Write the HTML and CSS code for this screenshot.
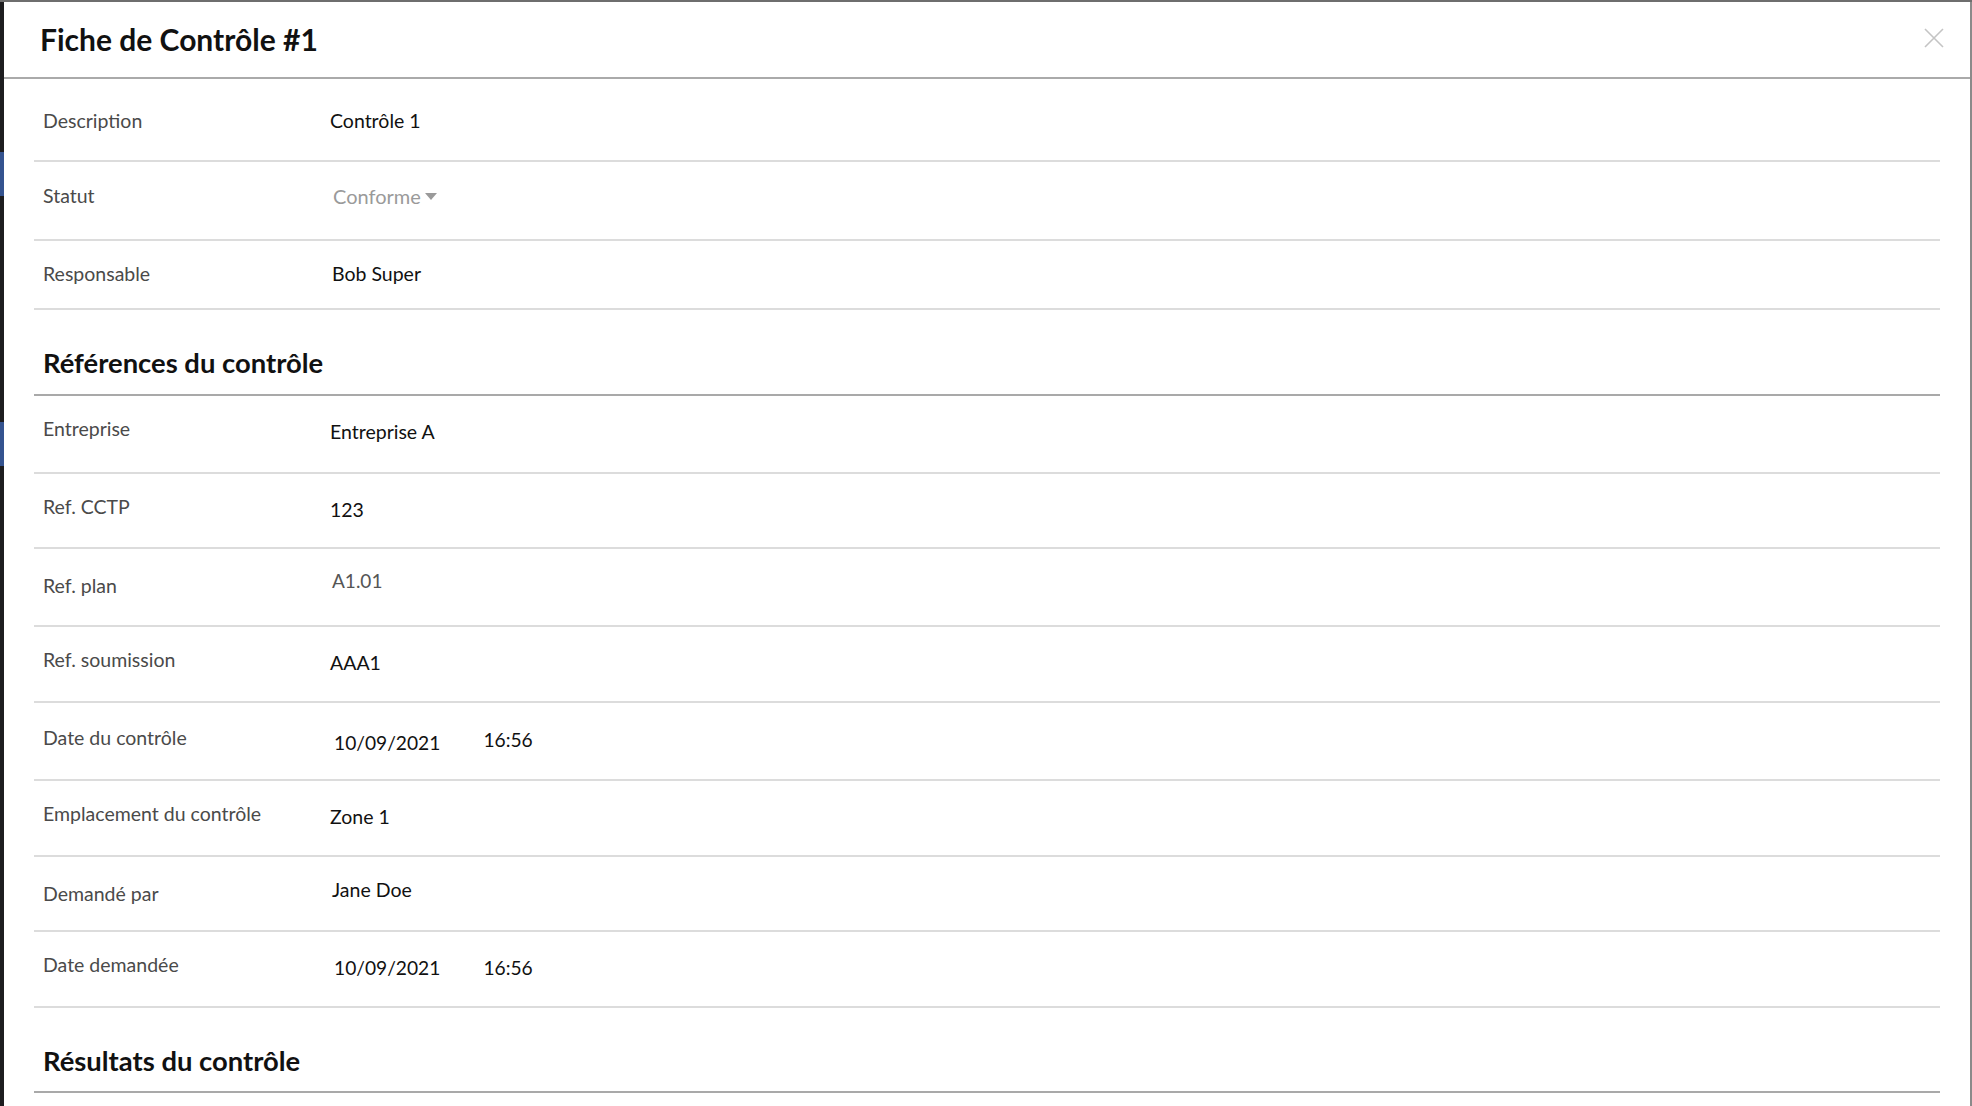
FILE: index.html
```html
<!DOCTYPE html>
<html lang="fr">

<head>
  <meta charset="UTF-8">
  <title>Fiche de Contrôle #1</title>
  <link rel="stylesheet" href="styles.css">
</head>

<body>
  <div class="screen">
    <!-- Bord de l'application derrière la modale -->
    <div class="app-rail">
      <span class="rail-gap rail-gap-1"></span>
      <span class="rail-mark"></span>
      <span class="rail-gap rail-gap-2"></span>
      <span class="rail-mark"></span>
    </div>

    <div class="modal">
      <div class="modal-header">
        <h1>Fiche de Contrôle #1</h1>
        <button class="close" aria-label="Fermer">
          <svg width="20" height="20" viewBox="0 0 20 20">
            <path d="M1 1 L19 19 M19 1 L1 19" stroke="#c4c4c4" stroke-width="1.6" fill="none"/>
          </svg>
        </button>
      </div>

      <div class="modal-body">
        <div class="row row-first">
          <div class="label">Description</div>
          <div class="value">Contrôle 1</div>
        </div>

        <div class="row row-select">
          <div class="label">Statut</div>
          <div class="value select">Conforme<span class="caret"></span></div>
        </div>

        <div class="row row-compact">
          <div class="label">Responsable</div>
          <div class="value value-name">Bob Super</div>
        </div>

        <h2 class="section-title">Références du contrôle</h2>

        <div class="row row-tall">
          <div class="label">Entreprise</div>
          <div class="value value-down">Entreprise A</div>
        </div>

        <div class="row row-short">
          <div class="label">Ref. CCTP</div>
          <div class="value value-down">123</div>
        </div>

        <div class="row row-tall">
          <div class="label label-down">Ref. plan</div>
          <div class="value value-muted">A1.01</div>
        </div>

        <div class="row">
          <div class="label">Ref. soumission</div>
          <div class="value value-down">AAA1</div>
        </div>

        <div class="row row-tall">
          <div class="label label-nudge">Date du contrôle</div>
          <div class="value value-date value-date-low">
            <span class="date">10/09/2021</span>
            <span class="time">16:56</span>
          </div>
        </div>

        <div class="row">
          <div class="label">Emplacement du contrôle</div>
          <div class="value value-down">Zone 1</div>
        </div>

        <div class="row row-short">
          <div class="label label-down">Demandé par</div>
          <div class="value value-name">Jane Doe</div>
        </div>

        <div class="row">
          <div class="label">Date demandée</div>
          <div class="value value-date">
            <span class="date">10/09/2021</span>
            <span class="time time-level">16:56</span>
          </div>
        </div>

        <h2 class="section-title section-title-last">Résultats du contrôle</h2>
      </div>
    </div>

    <div class="app-edge"></div>
  </div>
</body>

</html>
```

FILE: styles.css
```css
html,
body {
  margin: 0;
  padding: 0;
  height: 100%;
  overflow: hidden;
}

body {
  font-family: 'Lato', 'Open Sans', sans-serif;
  background-color: #1d1d1f;
  color: #111;
}

.screen {
  display: flex;
  height: 100%;
  border-top: 2px solid #6e6e6e;
  box-sizing: border-box;
}

/* Bord gauche de l'appli (visible derrière la modale) */
.app-rail {
  width: 4px;
  flex: 0 0 4px;
  display: flex;
  flex-direction: column;
}

.rail-gap-1 {
  height: 150px;
}

.rail-gap-2 {
  height: 226px;
}

.rail-mark {
  height: 44px;
  background-color: #34538f;
}

.app-edge {
  flex: 0 0 2px;
  background-color: #8a8a8a;
}

.modal {
  flex: 1;
  min-width: 0;
  background-color: white;
  display: flex;
  flex-direction: column;
}

.modal-header {
  display: flex;
  align-items: center;
  justify-content: space-between;
  height: 75px;
  padding: 0 26px 0 36px;
  border-bottom: 2px solid #aaa;
}

.modal-header h1 {
  margin: -2px 0 0;
  font-size: 30px;
  font-weight: 700;
  color: #111;
}

.close {
  background: none;
  border: none;
  padding: 0;
  margin-top: -4px;
  cursor: pointer;
  display: flex;
}

.modal-body {
  padding: 0 30px;
}

.row {
  display: flex;
  align-items: flex-start;
  height: 76px;
  padding: 22px 0 0 9px;
  box-sizing: border-box;
  border-bottom: 2px solid #dcdcdc;
}

.row-first {
  height: 83px;
  padding-top: 31px;
}

.row-select {
  height: 79px;
  padding-top: 23px;
}

.row-compact {
  height: 69px;
}

.row-tall {
  height: 78px;
}

.row-short {
  height: 75px;
}

.label {
  flex: 0 0 287px;
  font-size: 19.5px;
  line-height: 22px;
  color: #4a4a4a;
}

.label-down {
  margin-top: 4px;
}

.label-nudge {
  margin-top: 2px;
}

.value {
  font-size: 19.5px;
  line-height: 22px;
  color: #111;
}

.value-down {
  margin-top: 3px;
}

.value-name {
  padding-left: 2px;
}

.value-muted {
  color: #555;
  font-size: 19px;
  padding-left: 2px;
  margin-top: -1px;
}

.value-date {
  display: flex;
  gap: 43px;
  margin-top: 3px;
  padding-left: 4px;
  font-size: 19.2px;
}

.value-date-low {
  margin-top: 7px;
}

.value-date .time {
  margin-top: -3px;
}

.value-date .time-level {
  margin-top: 0;
}

.select {
  color: #9a9a9a;
  font-size: 20px;
  padding-left: 3px;
  display: flex;
  align-items: center;
}

.caret {
  width: 0;
  height: 0;
  margin-left: 4px;
  margin-top: 1px;
  border-left: 6px solid transparent;
  border-right: 6px solid transparent;
  border-top: 7px solid #9a9a9a;
}

.section-title {
  margin: 0;
  height: 86px;
  box-sizing: border-box;
  padding: 37px 0 0 9px;
  font-size: 27.4px;
  line-height: 32px;
  font-weight: 700;
  color: #111;
  border-bottom: 2px solid #a9a9a9;
}

.section-title-last {
  height: 85px;
}
```
